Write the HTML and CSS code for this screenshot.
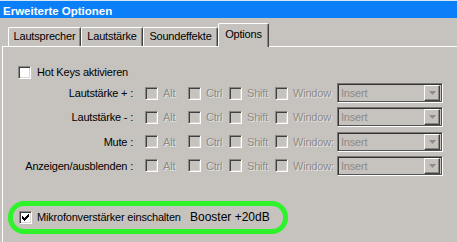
FILE: index.html
```html
<!DOCTYPE html>
<html>
<head>
    <meta charset="utf-8">
    <title>Erweiterte Optionen</title>
    <link rel="stylesheet" href="styles.css">
</head>
<body>
    <div class="titlebar">Erweiterte Optionen</div>

    <div class="tabs">
        <div class="tab tab-lautsprecher">Lautsprecher</div>
        <div class="tab tab-lautstaerke">Lautstärke</div>
        <div class="tab tab-sound">Soundeffekte</div>
        <div class="tab tab-options active">Options</div>
    </div>

    <div class="panel">
        <div class="hotkeys">
            <span class="cb"></span>
            <span>Hot Keys aktivieren</span>
        </div>

        <div class="keys">
            <div class="key-row">
                <span class="key-label">Lautstärke + :</span>
                <span class="mod mod-alt"><span class="cb off"></span>Alt</span>
                <span class="mod mod-ctrl"><span class="cb off"></span>Ctrl</span>
                <span class="mod mod-shift"><span class="cb off"></span>Shift</span>
                <span class="mod mod-win"><span class="cb off"></span>Window</span>
                <span class="combo"><span class="combo-text">Insert</span><span class="combo-btn"><svg width="7" height="4" viewBox="0 0 7 4"><path d="M0 0h7l-3.5 4z" fill="#8e8b87"/></svg></span></span>
            </div>
            <div class="key-row">
                <span class="key-label">Lautstärke - :</span>
                <span class="mod mod-alt"><span class="cb off"></span>Alt</span>
                <span class="mod mod-ctrl"><span class="cb off"></span>Ctrl</span>
                <span class="mod mod-shift"><span class="cb off"></span>Shift</span>
                <span class="mod mod-win"><span class="cb off"></span>Window</span>
                <span class="combo"><span class="combo-text">Insert</span><span class="combo-btn"><svg width="7" height="4" viewBox="0 0 7 4"><path d="M0 0h7l-3.5 4z" fill="#8e8b87"/></svg></span></span>
            </div>
            <div class="key-row">
                <span class="key-label">Mute :</span>
                <span class="mod mod-alt"><span class="cb off"></span>Alt</span>
                <span class="mod mod-ctrl"><span class="cb off"></span>Ctrl</span>
                <span class="mod mod-shift"><span class="cb off"></span>Shift</span>
                <span class="mod mod-win"><span class="cb off"></span>Window:</span>
                <span class="combo"><span class="combo-text">Insert</span><span class="combo-btn"><svg width="7" height="4" viewBox="0 0 7 4"><path d="M0 0h7l-3.5 4z" fill="#8e8b87"/></svg></span></span>
            </div>
            <div class="key-row">
                <span class="key-label">Anzeigen/ausblenden :</span>
                <span class="mod mod-alt"><span class="cb off"></span>Alt</span>
                <span class="mod mod-ctrl"><span class="cb off"></span>Ctrl</span>
                <span class="mod mod-shift"><span class="cb off"></span>Shift</span>
                <span class="mod mod-win"><span class="cb off"></span>Window:</span>
                <span class="combo"><span class="combo-text">Insert</span><span class="combo-btn"><svg width="7" height="4" viewBox="0 0 7 4"><path d="M0 0h7l-3.5 4z" fill="#8e8b87"/></svg></span></span>
            </div>
        </div>

        <div class="booster">
            <span class="cb">
                <svg width="7" height="7" viewBox="0 0 7 7" shape-rendering="crispEdges"><path d="M6 0h1v1h-1z M5 1h2v1h-2z M0 2h1v1h-1z M4 2h3v1h-3z M0 3h2v1h-2z M3 3h3v1h-3z M0 4h5v1h-5z M1 5h3v1h-3z M2 6h1v1h-1z" fill="#000"/></svg>
            </span>
            <span class="booster-label">Mikrofonverstärker einschalten</span>
            <span class="booster-value">Booster +20dB</span>
        </div>
    </div>
</body>
</html>
```

FILE: styles.css
```css
body {
    margin: 0;
    background-color: #c6c3bf;
    font-family: "Liberation Sans", Arial, sans-serif;
    font-size: 11px;
    letter-spacing: -0.2px;
    color: #000;
    overflow: hidden;
}

/* Title bar */
.titlebar {
    height: 17px;
    border-top: 1px solid #d6e4f5;
    background-color: #0a7ff7;
    color: #fff;
    font-weight: bold;
    font-size: 11.5px;
    letter-spacing: 0;
    line-height: 20px;
    padding-left: 3px;
    overflow: hidden;
}

/* Tabs */
.tabs {
    display: flex;
    align-items: flex-end;
    height: 28px;
    margin-left: 8px;
}

.tab {
    box-sizing: border-box;
    height: 19px;
    border-top: 1px solid #fff;
    border-left: 1px solid #fff;
    border-right: 1px solid #404040;
    box-shadow: inset -1px 0 0 #8a8784;
    border-top-left-radius: 2px;
    border-top-right-radius: 2px;
    text-align: center;
    line-height: 16px;
    padding-bottom: 2px;
}

.tab-lautsprecher { width: 73px; }
.tab-lautstaerke { width: 62px; }
.tab-sound { width: 75px; }

.tab.active {
    width: 51px;
    height: 24px;
    padding-top: 2px;
    margin-bottom: -1px;
    background-color: #c6c3bf;
    position: relative;
    z-index: 1;
}

/* Panel */
.panel {
    margin-left: 2px;
    height: 200px;
    border-top: 1px solid #fff;
    border-left: 1px solid #fff;
}

.cb {
    box-sizing: border-box;
    display: inline-flex;
    align-items: center;
    justify-content: center;
    flex: none;
    width: 13px;
    height: 13px;
    background-color: #fff;
    border: 1px solid;
    border-color: #8a8784 #fff #fff #8a8784;
    box-shadow: inset 1px 1px 0 #404040, inset -1px -1px 0 #d8d5d1;
}

.cb.off {
    background-color: #c6c3bf;
}

.hotkeys {
    display: flex;
    align-items: center;
    gap: 6px;
    height: 16px;
    margin-top: 17px;
    padding-left: 15px;
}

.keys {
    display: flex;
    flex-direction: column;
    gap: 4.33px;
    margin-top: 3px;
}

.key-row {
    display: flex;
    align-items: center;
    height: 20px;
}

.key-label {
    width: 130px;
    text-align: right;
    margin-right: 12px;
}

.mod {
    display: flex;
    align-items: center;
    gap: 5px;
    color: #8e8b87;
    text-shadow: 1px 1px 0 rgba(255, 255, 255, 0.55);
}

.mod-alt { width: 43px; }
.mod-ctrl { width: 41px; }
.mod-shift { width: 46px; }
.mod-win { width: 62px; }

.combo {
    box-sizing: border-box;
    display: flex;
    align-items: center;
    justify-content: space-between;
    width: 106px;
    height: 20px;
    border: 1px solid;
    border-color: #7a7774 #fff #fff #7a7774;
    box-shadow: inset 1px 1px 0 #333, inset -1px -1px 0 #555;
    padding: 2px;
}

.combo-text {
    color: #8e8b87;
    padding-left: 1px;
}

.combo-btn {
    box-sizing: border-box;
    display: flex;
    align-items: center;
    justify-content: center;
    width: 16px;
    height: 16px;
    border: 1px solid;
    border-color: #fff #404040 #404040 #fff;
    box-shadow: inset -1px -1px 0 #8a8784;
}

/* Highlighted booster row */
.booster {
    box-sizing: border-box;
    display: flex;
    align-items: center;
    width: 280px;
    height: 33px;
    margin-top: 25px;
    margin-left: 5px;
    padding-left: 6px;
    border: 5px solid #2ef22a;
    border-radius: 16px;
}

.booster-label {
    width: 153px;
    margin-left: 5px;
}

.booster-value {
    font-size: 12px;
    letter-spacing: 0;
}
```
